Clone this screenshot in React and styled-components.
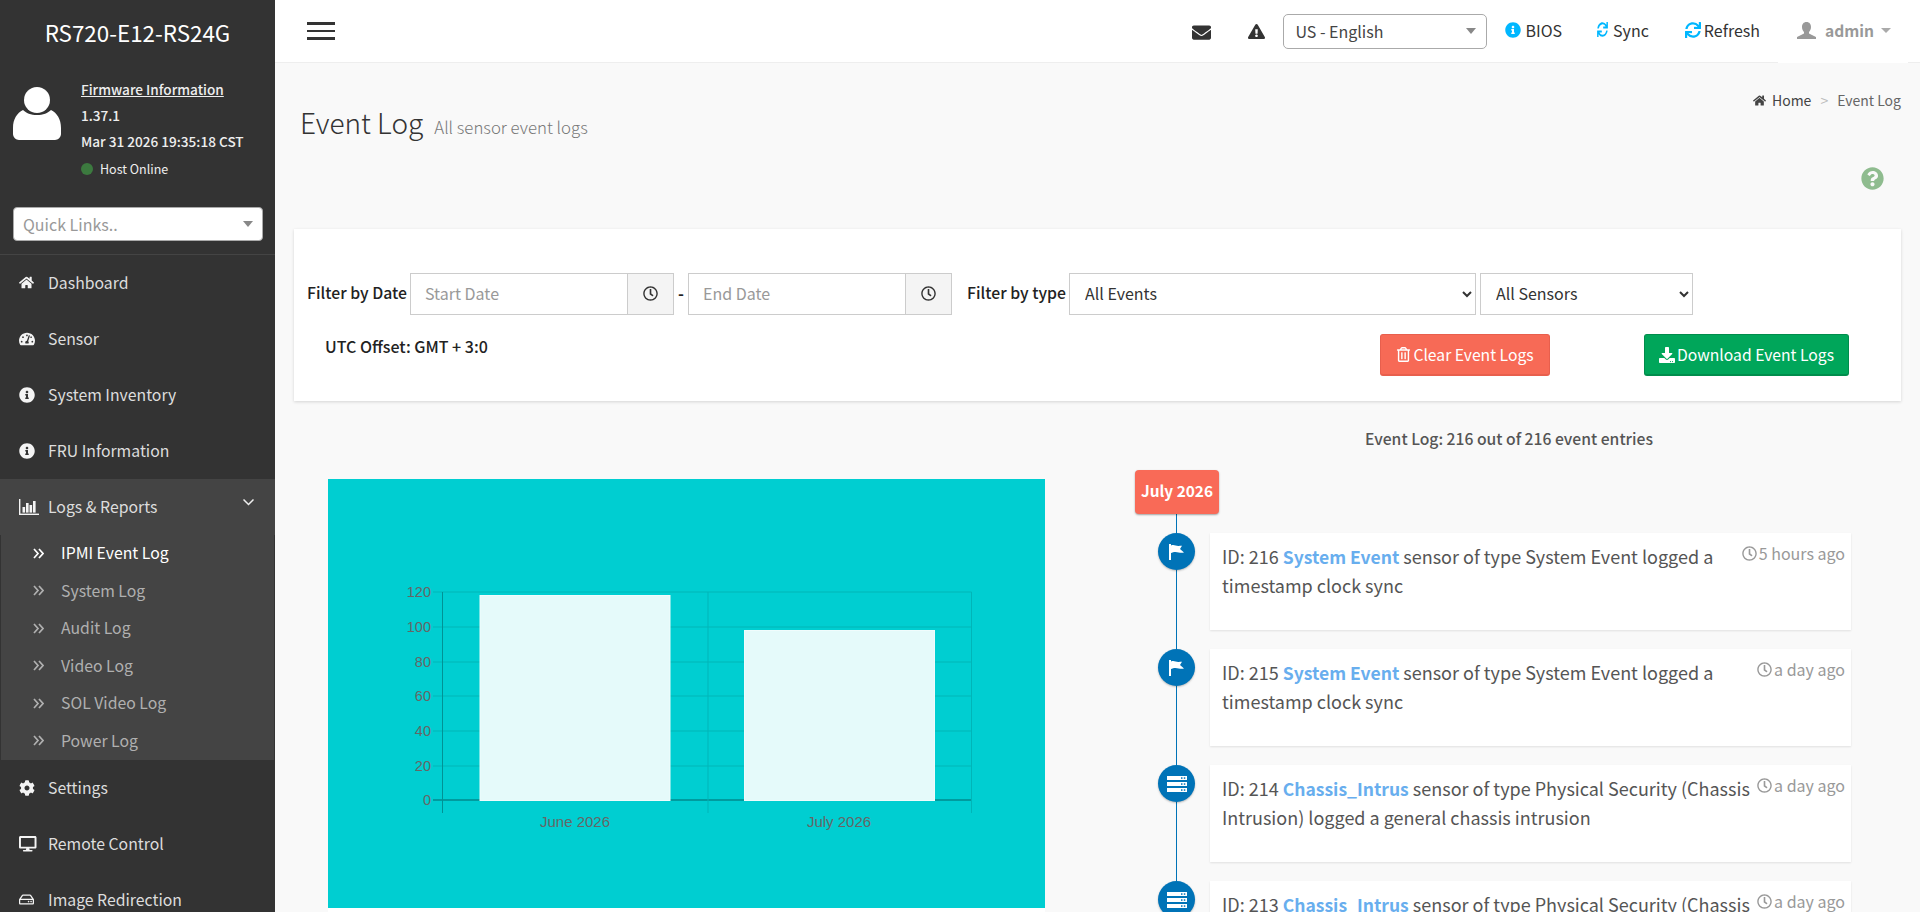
import React from 'react';
import styled, { createGlobalStyle } from 'styled-components';
import {
  FaHome, FaTachometerAlt, FaInfoCircle, FaCog, FaDesktop, FaRegHdd,
  FaEnvelope, FaExclamationTriangle, FaQuestionCircle, FaRegTrashAlt, FaDownload, FaRegClock, FaSync,
} from 'react-icons/fa';

const SANS = '"Noto Sans CJK SC", "Source Sans Pro", "Liberation Sans", sans-serif';

const Global = createGlobalStyle`
  html, body { margin: 0; padding: 0; height: 100%; overflow: hidden; background: #f9f9f9; }
  body { font-family: ${SANS}; color: #333; }
  * { box-sizing: border-box; }
`;

const Shell = styled.div`display: flex; height: 912px; overflow: hidden;`;

/* ---------- sidebar ---------- */
const Sidebar = styled.aside`width: 275px; flex: none; background: #333; color: #fff; display: flex; flex-direction: column; > * { flex: none; }`;
const Brand = styled.div`height: 62px; display: flex; align-items: center; justify-content: center; font-size: 22.4px; line-height: 28px; padding-top: 2px;`;
const UserPanel = styled.div`display: flex; height: 139px; padding: 14px 0 0 13px;`;
const Avatar = styled.div`width: 68px; flex: none; padding-top: 11px; svg { display: block; }`;
const Info = styled.div`display: flex; flex-direction: column; font-size: 13.6px; font-weight: 500; line-height: 26px; color: #eee;`;
const FwLink = styled.span`text-decoration: underline; color: #eee;`;
const Status = styled.div`display: flex; align-items: center; gap: 7px; font-size: 12.5px; font-weight: 400; margin-top: 2px;`;
const Dot = styled.i`width: 12px; height: 12px; border-radius: 50%; background: #3c7a3f;`;
const QuickWrap = styled.div`padding: 6px 12px 0 13px; border-bottom: 1px solid #444; height: 54px;`;
const Quick = styled.div`height: 34px; background: #fff; border: 1px solid #aaa; border-radius: 4px; display: flex; align-items: center; justify-content: space-between; padding: 0 9px 0 9px; color: #999; font-size: 16px; line-height: 24px;`;
const Caret = styled.i`width: 0; height: 0; border-left: 5px solid transparent; border-right: 5px solid transparent; border-top: 6px solid #888;`;
const NavItem = styled.div`height: 56px; display: flex; align-items: center; padding: 0 0 1px 19px; font-size: 15.8px; line-height: 24px; color: #ddd; position: relative; background: ${p => (p.$open ? '#444' : 'transparent')};`;
const NavIcon = styled.span`width: 29px; flex: none; display: flex; align-items: center; color: #f4f4f4;`;
const OpenArrow = styled.svg`position: absolute; right: 21px; top: 20px;`;
const SubList = styled.div`background: #444; border-left: 1px solid #333; border-right: 1px solid #333; height: 225px;`;
const SubItem = styled.div`height: 37.5px; display: flex; align-items: center; padding: 0 0 1px 32px; font-size: 15.8px; line-height: 24px; color: ${p => (p.$active ? '#fff' : '#b0b0b0')};`;
const SubIcon = styled.span`width: 28px; flex: none; display: flex;`;

/* ---------- top bar ---------- */
const Main = styled.main`flex: 1; min-width: 0; display: flex; flex-direction: column; > * { flex: none; }`;
const Topbar = styled.header`height: 63px; background: #fff; border-bottom: 1px solid #eee; display: flex; align-items: center; position: relative;`;
const Burger = styled.div`margin-left: 32px; width: 28px; display: flex; flex-direction: column; gap: 5px; margin-top: -1px;`;
const BurgerBar = styled.i`display: block; height: ${p => p.$h}px; background: #333;`;
const TopRight = styled.div`margin-left: auto; display: flex; align-items: flex-start; height: 63px; padding-right: 12px;`;
const TopIcon = styled.span`display: flex; color: #333; margin-left: ${p => p.$ml}px; margin-top: 23px;`;
const Lang = styled.div`width: 204px; height: 35px; margin-left: 18px; margin-top: 14px; border: 1px solid #aaa; border-radius: 5px; display: flex; align-items: center; justify-content: space-between; padding: 0 10px 0 11px; font-size: 16px; line-height: 24px; color: #444;`;
const TopLink = styled.div`display: flex; align-items: center; gap: ${p => p.$gap}px; margin-left: ${p => p.$ml}px; margin-top: 17px; height: 26px; font-size: 16px; line-height: 24px; color: #333;`;
const SyncIcon = styled(FaSync)`transform: scaleX(.72);`;
const AdminBox = styled.div`display: flex; align-items: center; margin-left: 18px; height: 63px; width: 130px; padding: 0 0 2px 19px; background: #fff; color: #999; font-size: 15.6px; font-weight: 700; gap: 9px; position: relative;`;
const SmallCaret = styled.i`width: 0; height: 0; border-left: 5px solid transparent; border-right: 5px solid transparent; border-top: 5px solid #aaa; margin-left: -2px;`;

/* ---------- content header ---------- */
const HeaderRow = styled.div`display: flex; height: 166px; padding: 27px 19px 0 25px; position: relative;`;
const Heading = styled.div`display: flex; align-items: baseline; gap: 11px; margin-top: 14px; height: 36px;`;
const H1 = styled.h1`margin: 0; font-size: 28px; line-height: 36px; font-weight: 300; color: #333;`;
const Sub = styled.small`font-size: 16.8px; line-height: 24px; color: #777; font-weight: 300;`;
const Crumb = styled.nav`margin-left: auto; display: flex; align-items: center; font-size: 14px; line-height: 20px; height: 20px; color: #444; svg { margin-right: 6px; }`;
const CrumbSep = styled.span`color: #bbb; margin: 0 9px 0 9px;`;
const CrumbCur = styled.span`color: #666;`;
const Help = styled.span`position: absolute; right: 36px; top: 104px; display: flex; color: #8fbc8f;`;

/* ---------- filter card ---------- */
const Card = styled.section`margin: 0 19px; height: 172px; background: #fff; box-shadow: 0 1px 3px rgba(0,0,0,.15); padding-top: 44px;`;
const FilterRow = styled.div`display: flex; align-items: center; height: 42px; padding-left: 13px;`;
const Label = styled.label`width: ${p => p.$w}px; flex: none; font-size: 15.8px; line-height: 22px; font-weight: 500; color: #222; margin-left: ${p => p.$ml || 0}px; margin-top: -2px; white-space: nowrap;`;
const DateGroup = styled.div`display: flex; width: 264px; height: 42px; border: 1px solid #ccc; background: #fff;`;
const DateInput = styled.input`flex: 1; min-width: 0; border: 0; outline: 0; padding: 0 14px 2px; font: 400 16px/22px ${SANS}; color: #333; &::placeholder { color: #999; opacity: 1; }`;
const Addon = styled.span`width: 46px; flex: none; background: #f4f4f4; border-left: 1px solid #ccc; display: flex; align-items: center; justify-content: center; padding-bottom: 1px; color: #333;`;
const Dash = styled.span`width: 14px; flex: none; text-align: center; font-size: 16px; font-weight: 700; color: #222; margin-top: -2px;`;
const Select = styled.select`width: ${p => p.$w}px; flex: none; height: 42px; margin-left: ${p => p.$ml}px; border: 1px solid #ccc; background: #fff; padding: 0 11px 2px; font: 400 16px ${SANS}; color: #333; border-radius: 0; outline: 0;`;
const ActionRow = styled.div`display: flex; align-items: flex-start; margin-top: 19px; padding: 0 52px 0 31px;`;
const Utc = styled.div`font-size: 16px; line-height: 22px; font-weight: 500; color: #222; margin-top: 1px;`;
const Buttons = styled.div`margin-left: auto; display: flex; gap: 94px;`;
const Btn = styled.button`height: 42px; width: ${p => p.$w}px; border: 1px solid ${p => p.$bd}; border-bottom-width: 2px; border-radius: 3px; background: ${p => p.$bg}; color: #fff; font: 400 15.7px/24px ${SANS}; display: flex; align-items: center; justify-content: center; padding: 0; gap: 2px;`;

/* ---------- lower part ---------- */
const Lower = styled.div`display: flex; flex: 1 !important; min-height: 0; padding-left: 53px;`;
const ChartCol = styled.div`width: 717px; flex: none; margin-top: 78px; background: #fff;`;
const ChartBox = styled.div`height: 429px; background: #00ced1; svg { display: block; }`;
const TimelineCol = styled.div`margin-left: 90px; width: 748px; flex: none; position: relative;`;
const Count = styled.div`margin-top: 26px; height: 24px; text-align: center; font-size: 15.7px; line-height: 24px; font-weight: 500; color: #555;`;
const Badge = styled.div`margin-top: 19px; width: 84px; height: 44px; padding-bottom: 5px; background: #f96a57; border-radius: 4px; color: #fff; font-size: 15.4px; font-weight: 700; display: flex; align-items: center; justify-content: center; box-shadow: 0 1px 2px rgba(0,0,0,.35); position: relative; z-index: 1;`;
const Rail = styled.div`position: absolute; left: 41px; top: 90px; bottom: 0; width: 1px; background: #0073b7;`;
const Entries = styled.div`display: flex; flex-direction: column; gap: 19px; margin-top: 19px;`;
const Entry = styled.article`height: 97px; flex: none; margin-left: 75px; width: 641px; background: #fff; box-shadow: 0 1px 2px rgba(0,0,0,.1); padding: 9px 6px 0 12px; position: relative; font-size: 18px; line-height: 28px; color: #555;`;
const Bubble = styled.span`position: absolute; left: -52px; top: 0; width: 37px; height: 37px; border-radius: 50%; background: #0073b7; color: #fff; display: flex; align-items: center; justify-content: center; box-shadow: 0 1px 2px rgba(0,0,0,.25);`;
const When = styled.span`float: right; font-size: 16px; line-height: 22px; color: #999; display: flex; align-items: center; gap: 2px; margin-left: 6px; margin-top: 0;`;
const Sensor = styled.b`color: #68aeee; font-weight: 700; font-size: 17.5px;`;

const events = [
  { id: 216, name: 'System Event', icon: 'flag', when: '5 hours ago', text: 'sensor of type System Event logged a timestamp clock sync' },
  { id: 215, name: 'System Event', icon: 'flag', when: 'a day ago', text: 'sensor of type System Event logged a timestamp clock sync' },
  { id: 214, name: 'Chassis_Intrus', icon: 'server', when: 'a day ago', text: 'sensor of type Physical Security (Chassis Intrusion) logged a general chassis intrusion' },
  { id: 213, name: 'Chassis_Intrus', icon: 'server', when: 'a day ago', text: 'sensor of type Physical Security (Chassis Intrusion) logged a general chassis intrusion' },
];

const topNav = [
  ['Dashboard', FaHome, 15], ['Sensor', FaTachometerAlt, 16], ['System Inventory', FaInfoCircle, 16], ['FRU Information', FaInfoCircle, 16],
];
const subNav = ['IPMI Event Log', 'System Log', 'Audit Log', 'Video Log', 'SOL Video Log', 'Power Log'];
const lowNav = [['Settings', FaCog, 16], ['Remote Control', FaDesktop, 17.5], ['Image Redirection', FaRegHdd, 15]];

const AvatarGlyph = () => (
  <svg width="48" height="53" viewBox="0 0 48 53" fill="#fff">
    <circle cx="24" cy="13" r="13" />
    <path d="M0 41c0-9 4-15 10-18 3 3 8 5 14 5s11-2 14-5c6 3 10 9 10 18v6c0 3-3 6-6 6H6c-3 0-6-3-6-6z" />
  </svg>
);
const BarsGlyph = () => (
  <svg width="20" height="16" viewBox="0 0 20 16" fill="#f4f4f4">
    <rect x="0" y="0" width="1.4" height="16" />
    <rect x="0" y="14.6" width="20" height="1.4" />
    <rect x="3.5" y="8" width="2.6" height="5.600" />
    <rect x="7" y="4" width="2.6" height="9.600" />
    <rect x="10.500" y="6" width="2.6" height="7.600" />
    <rect x="14" y="2" width="2.6" height="11.600" />
  </svg>
);
const DoubleChevron = () => (
  <svg width="11" height="11" viewBox="0 0 11 11" fill="none" stroke="currentColor" strokeWidth="1.7">
    <polyline points="1,1 5,5.500 1,10" />
    <polyline points="6,1 10,5.500 6,10" />
  </svg>
);
const PersonGlyph = () => (
  <svg width="19" height="17" viewBox="0 0 19 17" fill="#999">
    <path d="M9.500 0C6.500 0 5 2.300 5 5c0 2 .8 3.800 2 5v1.500L0 15v2h19v-2l-7-3.500V10c1.200-1.200 2-3 2-5 0-2.700-1.500-5-4.500-5z" />
  </svg>
);
const FlagGlyph = () => (
  <svg width="15" height="16" viewBox="0 0 15 16" fill="#fff">
    <rect x="0" y="0" width="2" height="16" />
    <path d="M2 1.500c3-1.500 5 .8 8 .4 1.200-.2 2.200-.1 3-.1L11 5l4 3.500c-3.500 1-5.500-.6-8.500-.6-1.800 0-3.300.5-4.500 1z" />
  </svg>
);
const ServerGlyph = () => (
  <svg width="20" height="16" viewBox="0 0 20 16">
    {[0, 6, 12].map(y => (
      <g key={y}>
        <rect x="0" y={y} width="20" height="4" fill="#fff" />
        <rect x="14" y={y + 1.3} width="1.5" height="1.5" fill="#0073b7" />
        <rect x="16.800" y={y + 1.3} width="1.5" height="1.5" fill="#0073b7" />
      </g>
    ))}
  </svg>
);

function Chart() {
  const grid = '#00b5b8';
  const ticks = [[120, 592], [100, 627], [80, 662], [60, 696], [40, 731], [20, 766], [0, 800]];
  const ox = 328, oy = 479;
  return (
    <svg width="717" height="429" viewBox={`${ox} ${oy} 717 429`}>
      {ticks.map(([v, y]) => (
        <g key={v}>
          <line x1="433" x2="971.5" y1={y} y2={y} stroke={v === 0 ? '#008a8d' : grid} strokeWidth={v === 0 ? 1.5 : 1.2} />
          <text x="431" y={y + 5} textAnchor="end" fontFamily="'Liberation Sans', Arial, sans-serif" fontSize="14.5" fill="#666">{v}</text>
        </g>
      ))}
      <line x1="442.5" x2="442.5" y1="592" y2="813" stroke="#009295" strokeWidth="1" />
      <line x1="708" x2="708" y1="592" y2="813" stroke={grid} strokeWidth="1" />
      <line x1="971.5" x2="971.5" y1="592" y2="813" stroke={grid} strokeWidth="1" />
      <rect x="480" y="595.5" width="190" height="205" fill="#e5fafa" stroke="#f0fcfc" />
      <rect x="744.5" y="630.5" width="190" height="170" fill="#e5fafa" stroke="#f0fcfc" />
      <text x="575" y="827" textAnchor="middle" fontFamily="'Liberation Sans', Arial, sans-serif" fontSize="15" fill="#666">June 2026</text>
      <text x="839" y="827" textAnchor="middle" fontFamily="'Liberation Sans', Arial, sans-serif" fontSize="15" fill="#666">July 2026</text>
    </svg>
  );
}

export default function App() {
  return (
    <Shell>
      <Global />
      <Sidebar>
        <Brand>RS720-E12-RS24G</Brand>
        <UserPanel>
          <Avatar><AvatarGlyph /></Avatar>
          <Info>
            <FwLink>Firmware Information</FwLink>
            <span>1.37.1</span>
            <span>Mar 31 2026 19:35:18 CST</span>
            <Status><Dot />Host Online</Status>
          </Info>
        </UserPanel>
        <QuickWrap><Quick>Quick Links..<Caret /></Quick></QuickWrap>
        {topNav.map(([label, Icon, size]) => (
          <NavItem key={label}><NavIcon><Icon size={size} /></NavIcon>{label}</NavItem>
        ))}
        <NavItem $open>
          <NavIcon><BarsGlyph /></NavIcon>Logs &amp; Reports
          <OpenArrow width="11" height="7" viewBox="0 0 11 7" fill="none" stroke="#eee" strokeWidth="1.5"><polyline points="0.5,0.5 5.500,5.500 10.500,0.500" /></OpenArrow>
        </NavItem>
        <SubList>
          {subNav.map((s, i) => (
            <SubItem key={s} $active={i === 0}><SubIcon><DoubleChevron /></SubIcon>{s}</SubItem>
          ))}
        </SubList>
        {lowNav.map(([label, Icon, size]) => (
          <NavItem key={label}><NavIcon><Icon size={size} /></NavIcon>{label}</NavItem>
        ))}
      </Sidebar>
      <Main>
        <Topbar>
          <Burger><BurgerBar $h={3} /><BurgerBar $h={2} /><BurgerBar $h={3} /></Burger>
          <TopRight>
            <TopIcon $ml={0}><FaEnvelope size={19} /></TopIcon>
            <TopIcon $ml={37}><FaExclamationTriangle size={17} /></TopIcon>
            <Lang>US - English<Caret /></Lang>
            <TopLink $ml={18} $gap={4}><FaInfoCircle size={16} color="#00b7ff" />BIOS</TopLink>
            <TopLink $ml={33} $gap={3}><SyncIcon size={15} color="#00b7ff" />Sync</TopLink>
            <TopLink $ml={36} $gap={3}><FaSync size={16} color="#00b7ff" />Refresh</TopLink>
            <AdminBox><PersonGlyph />admin<SmallCaret /></AdminBox>
          </TopRight>
        </Topbar>
        <HeaderRow>
          <Heading><H1>Event Log</H1><Sub>All sensor event logs</Sub></Heading>
          <Crumb><FaHome size={13} />Home<CrumbSep>&gt;</CrumbSep><CrumbCur>Event Log</CrumbCur></Crumb>
          <Help><FaQuestionCircle size={23} /></Help>
        </HeaderRow>
        <Card>
          <FilterRow>
            <Label $w={103}>Filter by Date</Label>
            <DateGroup><DateInput placeholder="Start Date" /><Addon><FaRegClock size={15} /></Addon></DateGroup>
            <Dash>-</Dash>
            <DateGroup><DateInput placeholder="End Date" /><Addon><FaRegClock size={15} /></Addon></DateGroup>
            <Label $w={102} $ml={15}>Filter by type</Label>
            <Select $w={407} $ml={0} defaultValue="all"><option value="all">All Events</option></Select>
            <Select $w={213} $ml={4} defaultValue="all"><option value="all">All Sensors</option></Select>
          </FilterRow>
          <ActionRow>
            <Utc>UTC Offset: GMT + 3:0</Utc>
            <Buttons>
              <Btn $w={170} $bg="#f76a56" $bd="#e85f4d"><FaRegTrashAlt size={15} />Clear Event Logs</Btn>
              <Btn $w={205} $bg="#00a65a" $bd="#008d4c"><FaDownload size={16} />Download Event Logs</Btn>
            </Buttons>
          </ActionRow>
        </Card>
        <Lower>
          <ChartCol><ChartBox><Chart /></ChartBox></ChartCol>
          <TimelineCol>
            <Rail />
            <Count>Event Log: 216 out of 216 event entries</Count>
            <Badge>July 2026</Badge>
            <Entries>
              {events.map(e => (
                <Entry key={e.id}>
                  <Bubble>{e.icon === 'flag' ? <FlagGlyph /> : <ServerGlyph />}</Bubble>
                  <When><FaRegClock size={15} />{e.when}</When>
                  ID: {e.id} <Sensor>{e.name}</Sensor> {e.text}
                </Entry>
              ))}
            </Entries>
          </TimelineCol>
        </Lower>
      </Main>
    </Shell>
  );
}
